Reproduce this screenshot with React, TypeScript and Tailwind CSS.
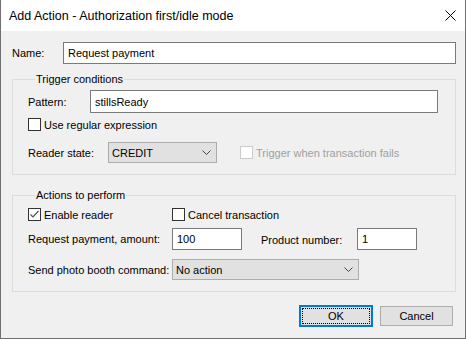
import React from "react"

function CheckBox({ label, checked = false, disabled = false }: { label: string; checked?: boolean; disabled?: boolean }) {
  return (
    <div className="flex items-center h-[13px]">
      <div
        className={
          "w-[13px] h-[13px] border bg-white flex items-center justify-center shrink-0 " +
          (disabled ? "border-[#cccccc]" : "border-[#333333]")
        }
      >
        {checked && (
          <svg width="11" height="11" viewBox="0 0 11 11">
            <polyline points="1.5,5.5 4,8 9.5,2" fill="none" stroke="#555555" strokeWidth="1.2" />
          </svg>
        )}
      </div>
      <span className={"ml-[3px] whitespace-nowrap " + (disabled ? "text-[#a0a0a0]" : "text-black")}>{label}</span>
    </div>
  )
}

function TextBox({ value, className }: { value: string; className: string }) {
  return (
    <div className={"border border-[#7a7a7a] bg-white flex items-center px-[4px] shrink-0 " + className}>
      {value}
    </div>
  )
}

function Combo({ value, className }: { value: string; className: string }) {
  return (
    <div className={"h-[21px] border border-[#adadad] bg-[#e1e1e1] flex items-center justify-between pl-[3px] pr-[5px] shrink-0 " + className}>
      <span>{value}</span>
      <svg width="9" height="5" viewBox="0 0 9 5">
        <polyline points="0.5,0.5 4.5,4.5 8.5,0.5" fill="none" stroke="#444444" strokeWidth="1" />
      </svg>
    </div>
  )
}

export default function App() {
  return (
    <div className="w-[466px] h-[339px] bg-[#f0f0f0] border-x border-b border-[#707070] flex flex-col font-['Liberation_Sans',Arial,sans-serif] text-[11px] text-black leading-[14px]">
      {/* title bar */}
      <div className="h-[31px] bg-white flex items-center justify-between pl-[8px] pr-[9px] shrink-0">
        <span className="text-[12.5px]">Add Action - Authorization first/idle mode</span>
        <svg width="11" height="11" viewBox="0 0 11 11">
          <path d="M0.5 0.5 L10.5 10.5 M10.5 0.5 L0.5 10.5" stroke="#000" strokeWidth="1" />
        </svg>
      </div>

      <div className="flex flex-col pl-[11px] pr-[9px]">
        <div className="mt-[11px] flex items-center">
          <span className="w-[51px]">Name:</span>
          <TextBox value="Request payment" className="h-[22px] flex-1" />
        </div>

        <fieldset className="mt-[8px] border border-[#dcdcdc] pl-[15px] pt-[4px] pb-[11px]">
          <legend className="ml-[7px] px-[1px] leading-[14px]">Trigger conditions</legend>
          <div className="flex items-center">
            <span className="w-[62px]">Pattern:</span>
            <TextBox value="stillsReady" className="h-[23px] w-[348px]" />
          </div>
          <div className="mt-[5px]">
            <CheckBox label="Use regular expression" />
          </div>
          <div className="mt-[11px] flex items-center">
            <span className="w-[80px]">Reader state:</span>
            <Combo value="CREDIT" className="w-[109px]" />
            <div className="ml-[23px]">
              <CheckBox label="Trigger when transaction fails" disabled />
            </div>
          </div>
        </fieldset>

        <fieldset className="mt-[13px] border border-[#dcdcdc] pl-[15px] pt-[6px] pb-[11px]">
          <legend className="ml-[7px] px-[1px] leading-[14px]">Actions to perform</legend>
          <div className="flex items-center">
            <div className="w-[144px]">
              <CheckBox label="Enable reader" checked />
            </div>
            <CheckBox label="Cancel transaction" />
          </div>
          <div className="mt-[7px] flex items-center">
            <span className="w-[144px]">Request payment, amount:</span>
            <TextBox value="100" className="h-[22px] w-[70px]" />
            <span className="ml-[19px] w-[96px] pt-[2px]">Product number:</span>
            <TextBox value="1" className="h-[22px] w-[60px]" />
          </div>
          <div className="mt-[9px] flex items-center">
            <span className="w-[144px]">Send photo booth command:</span>
            <Combo value="No action" className="w-[187px]" />
          </div>
        </fieldset>
      </div>

      <div className="mt-[13px] flex items-center justify-end gap-[7px] pr-[12px]">
        <button className="w-[74px] h-[22px] border-2 border-[#0078d7] bg-[#e1e1e1] p-[1px]">
          <div className="w-full h-full border border-dotted border-black flex items-center justify-center">OK</div>
        </button>
        <button className="w-[73px] h-[20px] border border-[#adadad] bg-[#e1e1e1] flex items-center justify-center">
          Cancel
        </button>
      </div>
    </div>
  )
}
